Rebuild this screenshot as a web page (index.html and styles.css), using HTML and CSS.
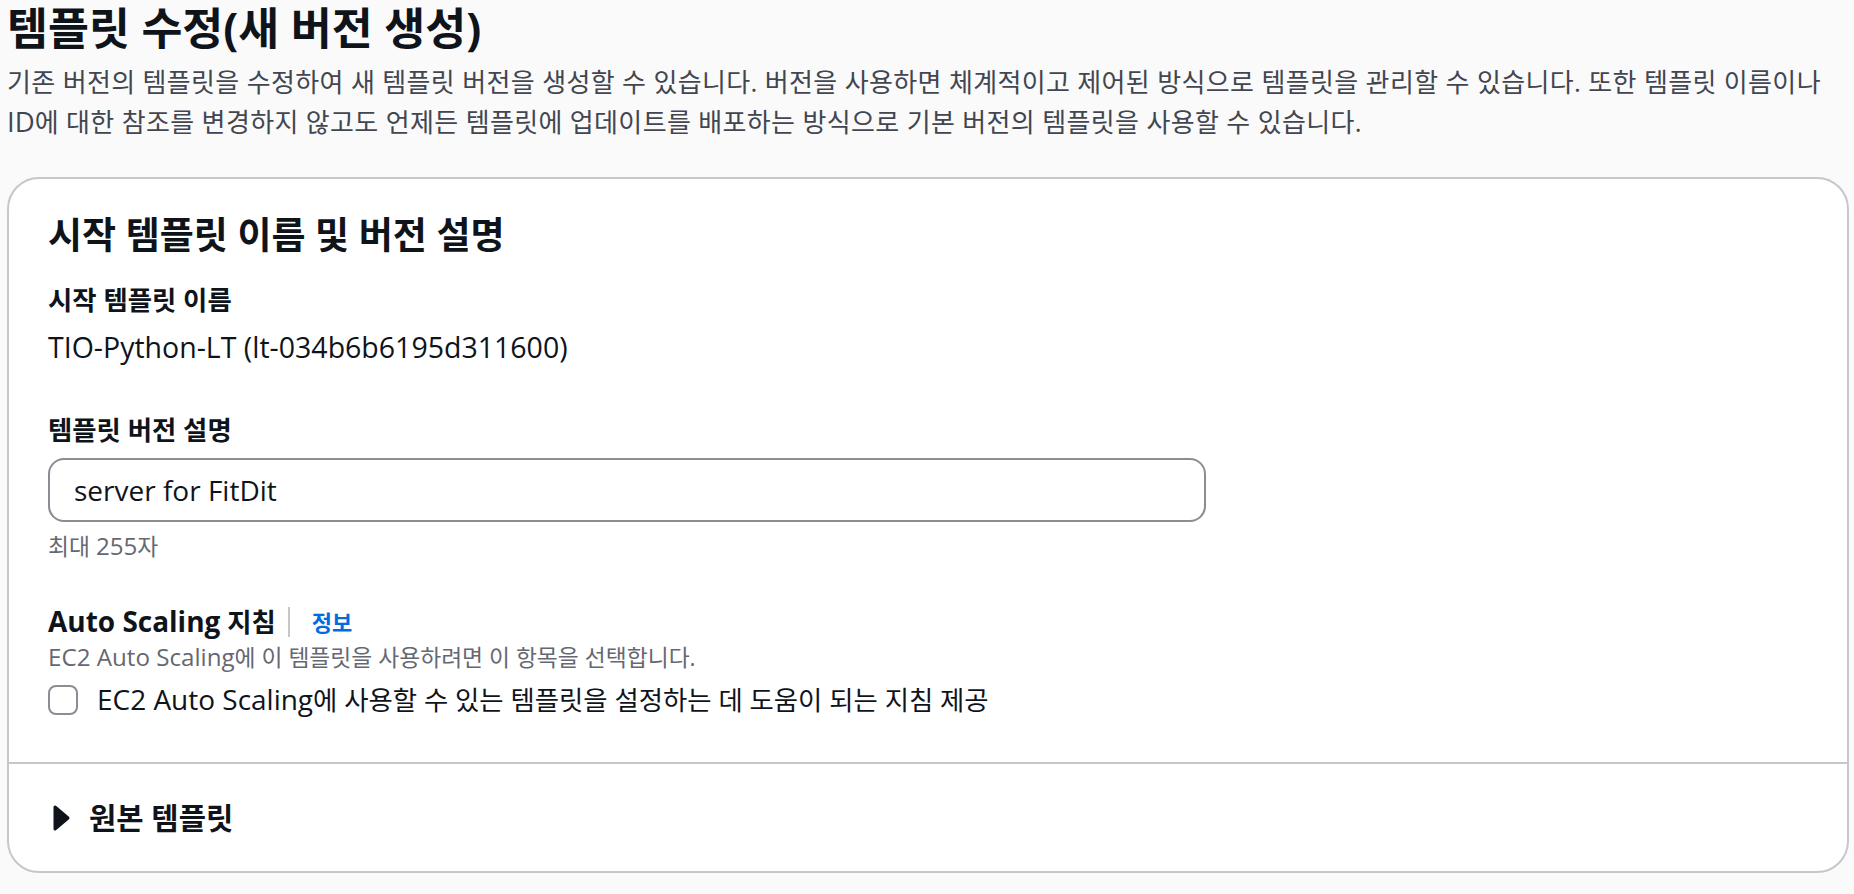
FILE: index.html
```html
<!DOCTYPE html>
<html lang="ko">
<head>
<meta charset="utf-8">
<title>템플릿 수정(새 버전 생성)</title>
<link rel="stylesheet" href="styles.css">
</head>
<body>
<main class="page">
  <header class="page-header">
    <h1 class="page-title">템플릿 수정(새 버전 생성)</h1>
    <p class="page-desc">기존 버전의 템플릿을 수정하여 새 템플릿 버전을 생성할 수 있습니다. 버전을 사용하면 체계적이고 제어된 방식으로 템플릿을 관리할 수 있습니다. 또한 템플릿 이름이나<br><span class="en">ID</span>에 대한 참조를 변경하지 않고도 언제든 템플릿에 업데이트를 배포하는 방식으로 기본 버전의 템플릿을 사용할 수 있습니다.</p>
  </header>

  <section class="card">
    <div class="card-body">
      <h2 class="card-title">시작 템플릿 이름 및 버전 설명</h2>

      <div class="field field-name">
        <div class="field-label">시작 템플릿 이름</div>
        <div class="field-value">TIO-Python-LT (lt-034b6b6195d311600)</div>
      </div>

      <div class="field field-desc">
        <label class="field-label" for="ver-desc">템플릿 버전 설명</label>
        <input class="text-input" id="ver-desc" type="text" value="server for FitDit">
        <div class="constraint">최대 <span class="en">255</span>자</div>
      </div>

      <div class="field field-guide">
        <div class="label-row">
          <span class="field-label"><span class="en">Auto Scaling</span> 지침</span>
          <span class="info-sep"></span>
          <a class="info-link" href="#">정보</a>
        </div>
        <div class="field-hint"><span class="en">EC2 Auto Scaling</span>에 이 템플릿을 사용하려면 이 항목을 선택합니다.</div>
        <label class="check-row">
          <span class="check-box"></span>
          <span class="check-text"><span class="en">EC2 Auto Scaling</span>에 사용할 수 있는 템플릿을 설정하는 데 도움이 되는 지침 제공</span>
        </label>
      </div>
    </div>

    <div class="expand">
      <div class="expand-header">
        <svg class="caret" viewBox="0 0 16 16" aria-hidden="true"><path d="M5.5 2.5v11L12 8z"/></svg>
        <span class="expand-title">원본 템플릿</span>
      </div>
    </div>
  </section>
</main>
</body>
</html>
```

FILE: styles.css
```css
* {
  box-sizing: border-box;
}

html,
body {
  margin: 0;
}

body {
  background: #fafafa;
  color: #0f141a;
  font-family: "Open Sans", "Noto Sans CJK KR", sans-serif;
}

.page {
  padding: 2px 5px 0 7px;
}

.page-title {
  margin: 0;
  font-size: 44.5px;
  line-height: 52px;
  font-weight: 700;
}

.page-desc {
  margin: 8px 0 0;
  font-size: 26px;
  line-height: 40px;
  color: #424650;
  letter-spacing: 0.35px;
}

.en {
  font-size: 1.06em;
  line-height: 1;
  letter-spacing: 0;
}

.card {
  margin-top: 35px;
  background: #fff;
  border: 2px solid #c6c6cd;
  border-radius: 32px;
  overflow: hidden;
}

.card-body {
  padding: 36px 39px 42px;
}

.card-title {
  margin: 0;
  font-size: 37px;
  line-height: 40px;
  font-weight: 700;
}

.field-label {
  display: block;
  font-size: 26.4px;
  line-height: 40px;
  font-weight: 700;
}

.field-name {
  margin-top: 25px;
}

.field-value {
  margin-top: 7px;
  font-size: 28.5px;
  line-height: 40px;
}

.field-desc {
  margin-top: 43px;
}

.text-input {
  display: block;
  margin-top: 8px;
  width: 1158px;
  height: 64px;
  border: 2px solid #8c8c94;
  border-radius: 16px;
  padding: 0 24px;
  font-family: "Open Sans", sans-serif;
  font-size: 28px;
  color: #0f141a;
  background: #fff;
  outline: none;
}

.constraint {
  margin-top: 9px;
  font-size: 22.8px;
  line-height: 32px;
  color: #656871;
}

.field-guide {
  margin-top: 39px;
}

.label-row {
  display: flex;
  align-items: center;
  height: 40px;
}

.info-sep {
  width: 2px;
  height: 30px;
  margin-left: 12px;
  background: #c6c6cd;
}

.info-link {
  margin-left: 22px;
  font-size: 22px;
  line-height: 40px;
  font-weight: 700;
  color: #006ce0;
  text-decoration: none;
}

.field-hint {
  font-size: 22.8px;
  line-height: 32px;
  color: #656871;
}

.check-row {
  display: flex;
  align-items: center;
  gap: 19px;
  margin-top: 6px;
  font-size: 26.4px;
  line-height: 40px;
}

.check-box {
  flex: none;
  width: 30px;
  height: 30px;
  border: 2px solid #8c8c94;
  border-radius: 8px;
  background: #fff;
}

.expand {
  border-top: 2px solid #c6c6cd;
  padding: 34px 39px 33px;
}

.expand-header {
  display: flex;
  align-items: center;
  font-size: 29.7px;
  line-height: 40px;
  font-weight: 700;
}

.caret {
  flex: none;
  width: 32px;
  height: 32px;
  margin-left: -4px;
  margin-right: 13px;
  fill: #0f141a;
  stroke: #0f141a;
  stroke-width: 1.5;
  stroke-linejoin: round;
}
```
